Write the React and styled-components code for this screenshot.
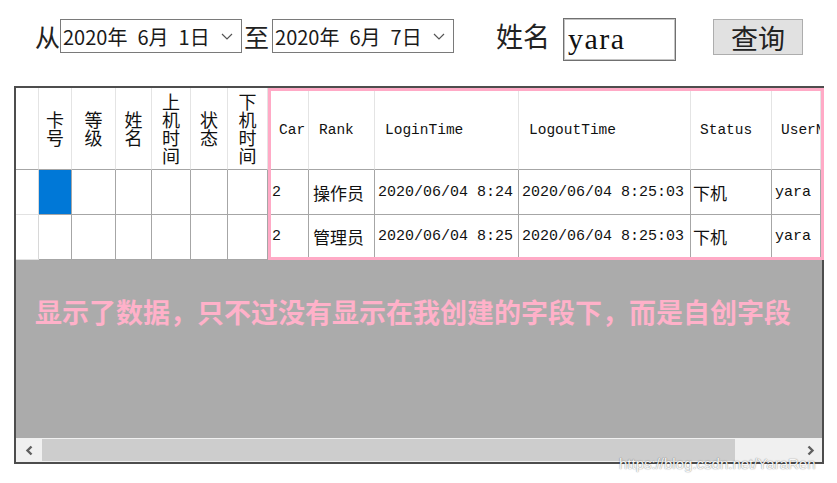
import React from 'react';
import styled, { createGlobalStyle } from 'styled-components';

const GlobalStyle = createGlobalStyle`
  html, body {
    margin: 0;
    padding: 0;
    background: #fff;
  }
  body {
    font-family: "Noto Sans CJK SC", sans-serif;
    color: #1a1a1a;
  }
`;

const PINK = '#ffaac6';
const GRID = '#a6a6a6';
const SOFT = '#e4e4e4';

const Page = styled.div`
  position: relative;
  width: 837px;
  height: 483px;
  overflow: hidden;
`;

const Toolbar = styled.div`
  display: flex;
  align-items: flex-start;
  height: 43px;
  padding: 18px 0 0 35px;
`;

const Label = styled.span`
  display: block;
  height: 36px;
  line-height: 36px;
  font-size: ${p => p.$size}px;
  margin-left: ${p => p.$ml || 0}px;
  margin-right: ${p => p.$mr || 0}px;
  white-space: nowrap;
  color: #222;
`;

const DateBox = styled.div`
  box-sizing: border-box;
  width: 182px;
  height: 34px;
  margin-top: 1px;
  border: 1px solid #7a7a7a;
  display: flex;
  align-items: center;
  justify-content: space-between;
  padding: 0 8px 0 2px;
  font-size: 20px;
  white-space: pre;
  background: #fff;
`;

const NameInput = styled.input`
  box-sizing: border-box;
  width: 113px;
  height: 43px;
  border: 1px solid #707070;
  box-shadow: inset 0 0 0 1px #c4c4c4;
  padding: 0 0 2px 4px;
  font-family: "Liberation Serif", serif;
  font-size: 30px;
  letter-spacing: 1.5px;
  color: #111;
  outline: none;
`;

const QueryButton = styled.button`
  box-sizing: border-box;
  width: 90px;
  height: 36px;
  margin: 1px 0 0 37px;
  padding: 0;
  border: 1px solid #adadad;
  background: #e1e1e1;
  font-family: "Noto Sans CJK SC", sans-serif;
  font-size: 27px;
  line-height: 1;
  color: #222;
`;

const Panel = styled.div`
  box-sizing: border-box;
  width: 810px;
  height: 378px;
  margin: 25px 0 0 14px;
  border: 2px solid #4d4d4d;
  background: #ababab;
  display: flex;
  flex-direction: column;
`;

const Tables = styled.div`
  display: flex;
  flex-shrink: 0;
  height: 172px;
`;

const Grid = styled.div`
  display: grid;
  grid-template-columns: ${p => p.$cols.map(c => c + 'px').join(' ')};
  grid-template-rows: ${p => p.$rows.map(r => r + 'px').join(' ')};
  background: #fff;
`;

const Mapped = styled(Grid)`
  box-sizing: border-box;
  width: 556px;
  margin-right: -2px;
  border: 3px solid ${PINK};
  overflow: hidden;
  position: relative;
`;

const Cell = styled.div`
  box-sizing: border-box;
  overflow: hidden;
  white-space: nowrap;
  display: flex;
  align-items: center;
  justify-content: ${p => (p.$center ? 'center' : 'flex-start')};
  padding-left: ${p => p.$pad || 0}px;
  border-right: 1px solid ${p => p.$side || GRID};
  border-bottom: ${p => (p.$noBottom ? 'none' : `1px solid ${p.$under || GRID}`)};
  background: ${p => (p.$selected ? '#0078d7' : '#fff')};
`;

const Vertical = styled.span`
  writing-mode: vertical-rl;
  font-size: 18px;
  line-height: 1;
  color: #111;
`;

const Mono = styled.span`
  font-family: "Liberation Mono", monospace;
  font-size: ${p => p.$size || 15}px;
  color: #111;
`;

const Han = styled.span`
  font-size: 17px;
  color: #111;
`;

const Empty = styled.div`
  flex: 1;
  padding: 37px 0 0 19px;
`;

const Note = styled.div`
  font-size: 27px;
  line-height: 30px;
  font-weight: 700;
  color: #ffb1c9;
  white-space: nowrap;
`;

const Scrollbar = styled.div`
  display: flex;
  flex-shrink: 0;
  height: 24px;
  background: #f0f0f0;
`;

const ArrowButton = styled.div`
  width: ${p => p.$w}px;
  display: flex;
  align-items: center;
  justify-content: center;
`;

const Thumb = styled.div`
  width: 693px;
  margin: 1px 0;
  background: #cdcdcd;
`;

const Track = styled.div`
  flex: 1;
`;

const Watermark = styled.div`
  position: absolute;
  left: 619px;
  top: 455px;
  font-family: "Liberation Sans", sans-serif;
  font-size: 15px;
  color: rgba(255, 255, 255, 0.95);
  text-shadow: 0 0 1px rgba(0, 0, 0, 0.45), 0 0 2px rgba(0, 0, 0, 0.2);
  white-space: nowrap;
`;

const Chevron = ({ dir }) => (
  <svg width="9" height="11" viewBox="0 0 9 11">
    <path
      d={dir === 'left' ? 'M6.5 1.5 L2.5 5.5 L6.5 9.5' : 'M2.5 1.5 L6.5 5.5 L2.5 9.5'}
      fill="none"
      stroke="#606060"
      strokeWidth="2.4"
    />
  </svg>
);

const Caret = () => (
  <svg width="12" height="7" viewBox="0 0 12 7">
    <path d="M1 1 L6 6 L11 1" fill="none" stroke="#555" strokeWidth="1.2" />
  </svg>
);

const leftCols = [23, 33, 44, 36, 39, 37, 40];
const leftHeads = ['', '卡号', '等级', '姓名', '上机时间', '状态', '下机时间'];

const rightCols = [38, 66, 144, 172, 81, 49];
const rightHeads = ['Car', 'Rank', 'LoginTime', 'LogoutTime', 'Status', 'UserName'];
const headPad = [8, 10, 10, 10, 9, 9];

const records = [
  ['2', '操作员', '2020/06/04 8:24', '2020/06/04 8:25:03', '下机', 'yara'],
  ['2', '管理员', '2020/06/04 8:25', '2020/06/04 8:25:03', '下机', 'yara'],
];
const dataPad = [1, 4, 3, 3, 2, 3];

const isHan = s => /[\u4e00-\u9fff]/.test(s);

export default function App() {
  return (
    <Page>
      <GlobalStyle />
      <Toolbar>
        <Label $size={25}>从</Label>
        <DateBox>
          <span>2020年{'\u2002'}6月{'\u2002'}1日</span>
          <Caret />
        </DateBox>
        <Label $size={25} $ml={2} $mr={3}>至</Label>
        <DateBox>
          <span>2020年{'\u2002'}6月{'\u2002'}7日</span>
          <Caret />
        </DateBox>
        <Label $size={27} $ml={42} $mr={13}>姓名</Label>
        <NameInput readOnly defaultValue="yara" />
        <QueryButton>查询</QueryButton>
      </Toolbar>

      <Panel>
        <Tables>
          <Grid $cols={leftCols} $rows={[82, 45, 45]}>
            {leftHeads.map((h, i) => (
              <Cell key={'h' + i} $center $side={SOFT}>
                {h && <Vertical>{h}</Vertical>}
              </Cell>
            ))}
            {[0, 1].map(r =>
              leftCols.map((_, i) => (
                <Cell
                  key={r + '-' + i}
                  $side={i === 0 ? '#d8d8d8' : GRID}
                  $under={i === 0 ? '#e2e2e2' : GRID}
                  $selected={r === 0 && i === 1}
                />
              ))
            )}
          </Grid>

          <Mapped $cols={rightCols} $rows={[79, 45, 42]}>
            {rightHeads.map((h, i) => (
              <Cell key={'h' + i} $pad={headPad[i]} $side={SOFT}>
                <Mono $size={14.5}>{h}</Mono>
              </Cell>
            ))}
            {records.map((row, r) =>
              row.map((v, i) => (
                <Cell key={r + '-' + i} $pad={dataPad[i]} $noBottom={r === records.length - 1}>
                  {isHan(v) ? <Han>{v}</Han> : <Mono>{v}</Mono>}
                </Cell>
              ))
            )}
          </Mapped>
        </Tables>

        <Empty>
          <Note>显示了数据，只不过没有显示在我创建的字段下，而是自创字段</Note>
        </Empty>

        <Scrollbar>
          <ArrowButton $w={26}>
            <Chevron dir="left" />
          </ArrowButton>
          <Thumb />
          <Track />
          <ArrowButton $w={24}>
            <Chevron dir="right" />
          </ArrowButton>
        </Scrollbar>
      </Panel>

      <Watermark>https://blog.csdn.net/YaraRen</Watermark>
    </Page>
  );
}
